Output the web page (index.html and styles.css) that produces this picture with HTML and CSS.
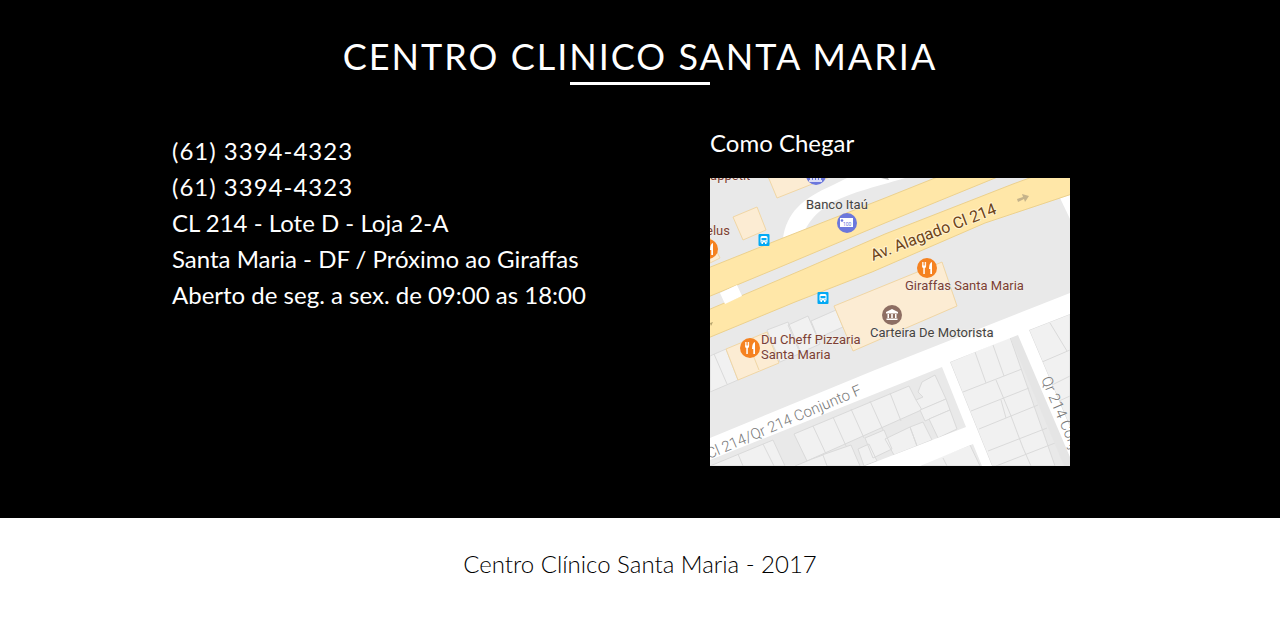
FILE: index.html
```html
<!DOCTYPE html>
<html lang="pt-BR">
<head>
<meta charset="utf-8">
<meta name="viewport" content="width=device-width, initial-scale=1">
<title>Centro Clínico Santa Maria</title>
<link rel="stylesheet" href="styles.css">
</head>
<body>
<section class="contact">
  <h2 class="contact-title">CENTRO CLINICO SANTA MARIA</h2>
  <div class="contact-grid">
    <address class="details">
      <p class="phone">(61) 3394-4323</p>
      <p class="phone">(61) 3394-4323</p>
      <p>CL 214 - Lote D - Loja 2-A</p>
      <p>Santa Maria - DF / Próximo ao Giraffas</p>
      <p>Aberto de seg. a sex. de 09:00 as 18:00</p>
    </address>
    <div class="directions">
      <h3 class="directions-title">Como Chegar</h3>
      <svg class="map" viewBox="0 0 360 288" role="img" aria-label="Mapa: Av. Alagado Cl 214, Santa Maria">
        <defs>
          <g id="food">
            <circle r="10" fill="#f58220"/>
            <path d="M-5-6v4q0 2 1.300 2v6h1.500v-6q1.300 0 1.300-2v-4h-1v3.600h-.8V-6h-.8v3.600h-.7V-6z" fill="#fff"/>
            <path d="M5-6q-3 1-3 7h1.300v5H5z" fill="#fff"/>
          </g>
          <g id="bus">
            <rect x="-5.500" y="-6" width="11" height="12" rx="1" fill="#03a9f4"/>
            <path d="M-3.500-2.500q0-1.500 1.500-1.500h4q1.500 0 1.500 1.500v5h-1v1.500h-1.500v-1.500h-2v1.500h-1.500v-1.500h-1z" fill="#fff"/>
            <path d="M-2.500-2h5v2.300h-5zM-2.500 1.200h1v.8h-1zM1.500 1.200h1v.8h-1z" fill="#03a9f4"/>
          </g>
        </defs>
        <rect width="360" height="288" fill="#e9e9e9"/>

        <g fill="#f1f1f1" stroke="#dadada" stroke-width="1">
          <path d="M0 178 L16 171 L28 202 L0 214z M4 176L17 206"/>
          <path d="M57 152 L78 144 L91 175 L70 184z M78 147 L98 138 L110 166 L90 175z M101 143 L126 132 L133 149 L108 160z"/>
          <path d="M84 256 L199 208 L206 222 L213 219 L208 214 L212 204 L225 197 L236 221 L97 283z"/>
          <path d="M103 248 L116 276 M123 239 L136 268 M141 231 L154 260 M160 223 L173 252 M180 215 L191 243 M206 222 L212 232"/>
          <path d="M210 232 L236 221 L240 232 L215 243z"/>
          <path d="M112 277 L141 267 L150 288 H117z M148 271 L159 266 L167 283 L154 288z M155 260 L174 252 L182 271 L163 280z M175 261 L200 249 L207 268 L184 277z M200 249 L213 244 L222 262 L207 268z M219 241 L240 232 L247 251 L228 260z"/>
          <path d="M0 288 L63 262 L75 288z M28 276 L33 288 M53 266 L64 288 M85 288 L102 281 L113 277 L117 288"/>
          <path d="M240 184 L300 159 L345 288 H282z M265 174 L276 205 M283 167 L294 198 M253 214 L312 191 M286 202 L301 238 L313 270 L321 288 M261 233 L319 210 M269 251 L328 227 M278 273 L337 250 M286 288 L345 265 M291 222 L296 240"/>
          <path d="M319 152 L360 136 V249z M340 145 L357 173 M332 184 L360 172 M342 207 L360 198 M349 223 L360 218"/>
          <path d="M205 288 L260 267 L270 288z M233 280 L237 288"/>
        </g>
        <path d="M300 159 L308 157 L360 279 V288 H354z" fill="#e5e5e5"/>

        <g fill="#fcecd3" stroke="#f0d6a5" stroke-width="1">
          <path d="M23 39 L47 29 L56 52 L33 62z"/>
          <path d="M57 -4 L67 20 L120 -1z"/>
          <path d="M124 128 L232 84 L247 128 L143 173z"/>
          <path d="M16 171 L57 154 L69 185 L28 202z M37 162 L49 192"/>
          <path d="M0 60 L10 80 L0 85z"/>
        </g>

        <g fill="#fff">
          <path d="M0 260 L165 192 L360 115 V136 L319 152 L360 249 V279 L308 157 L240 184 L282 288 H272 L263 266 L210 288 H155 L256 249 L232 189 L0 282z"/>
          <path d="M73 60 C77 35 91 21 123 7 L137 0 H195 C165 9 135 16 118 27 C103 37 99 45 95 52z"/>
          <path d="M350 20 L360 16 V41z"/>
        </g>
        <g fill="#ffe7a8" stroke="#ecd18e" stroke-width="1">
          <path d="M-2 90 L73 60 L175 20 L230 -2 H290 L175 45 L63 92 L-2 119z"/>
          <path d="M-2 132 L92 92 L175 56 L303 6 L325 -2 H362 V16 L275 45 L162 94 L85 124 L-2 160z"/>
        </g>
        <path d="M10 115 L27 107 L32 118 L15 126z" fill="#fff"/>
        <path d="M307 21 L313 19 L312 16 L319 18 L315 24 L314 21 L308 24z" fill="#c5b38a"/>
        <path d="M171 0 L179 2 L178 0z" fill="#bbb"/>
        <path d="M0 145 l3-1-2 4z" fill="#b6a36c"/>

        <g class="map-label map-label-halo">
          <text x="96" y="31">Banco Itaú</text>
          <text x="160" y="159">Carteira De Motorista</text>
        </g>
        <g class="map-label map-label-food map-label-halo">
          <text x="-5" y="2">l'appétit</text>
          <text x="-4" y="57">elus</text>
          <text x="195" y="112">Giraffas Santa Maria</text>
          <text x="51" y="166">Du Cheff Pizzaria</text>
          <text x="51" y="181">Santa Maria</text>
        </g>
        <text class="map-avenue" transform="translate(163 83) rotate(-21)">Av. Alagado Cl 214</text>
        <text class="map-street" transform="translate(-1 281) rotate(-23)">Cl 214/Qr 214 Conjunto F</text>
        <text class="map-street" transform="translate(331 201) rotate(67)">Qr 214 Conjunto</text>

        <use href="#bus" x="54" y="62"/>
        <use href="#bus" x="113" y="120"/>
        <use href="#food" x="217" y="90"/>
        <use href="#food" x="40" y="170"/>
        <use href="#food" x="-2" y="71"/>
        <circle cx="106" cy="-3" r="10" fill="#6b77dc"/>
        <path d="M99 3h13M101-2v4M104-2v4M107-2v4M110-2v4" stroke="#fff" stroke-width="1.500"/>
        <circle cx="137" cy="45" r="10" fill="#6b77dc"/>
        <rect x="130" y="40" width="13" height="9" fill="#fff"/>
        <circle cx="132" cy="42.500" r="1.300" fill="#6b77dc"/>
        <text class="map-note" x="133" y="48">100</text>
        <circle cx="182" cy="137" r="10" fill="#8d6e63"/>
        <path d="M176 135.500V134l6-3 6 3v1.500zM177.500 136h1.500v4h-1.500zM181.200 136h1.600v4h-1.600zM185 136h1.500v4H185zM176.500 140.500h11v1.500h-11z" fill="#fff"/>
      </svg>
    </div>
  </div>
</section>
<footer class="footer">Centro Clínico Santa Maria - 2017</footer>
</body>
</html>
```
FILE: styles.css
```css
* {
  box-sizing: border-box;
}

body {
  margin: 0;
  background: #fff;
  color: #000;
  font-family: Lato, "Liberation Sans", sans-serif;
  font-size: 24px;
  line-height: 36px;
}

h2,
h3,
p {
  margin: 0;
  font-weight: 400;
}

.contact {
  padding: 35px 16px 52px;
  background: #000;
  color: #fff;
}

.contact-title {
  font-size: 36px;
  line-height: 42px;
  letter-spacing: 2px;
  text-align: center;
}

.contact-title::after {
  content: "";
  display: block;
  width: 140px;
  height: 3px;
  margin: 5px auto 0;
  background: #fff;
}

.contact-grid {
  display: grid;
  grid-template-columns: 1fr 1fr;
  max-width: 1140px;
  margin: 40px auto 0;
}

.details {
  padding: 8px 0 0 102px;
  font-style: normal;
}

.phone {
  letter-spacing: 1px;
}

.directions {
  padding-left: 70px;
}

.directions-title {
  font-size: 24px;
}

.map {
  display: block;
  width: 100%;
  max-width: 360px;
  margin-top: 17px;
}

.map-label {
  font-family: Roboto, sans-serif;
  font-size: 13px;
  fill: #444;
}

.map-label-food {
  fill: #7b3f35;
}

.map-label-halo {
  paint-order: stroke;
  stroke: #f4f0ea;
  stroke-width: 1px;
}

.map-avenue {
  font-family: Roboto, sans-serif;
  font-size: 16px;
  fill: #6d4318;
  paint-order: stroke;
  stroke: #fff3d0;
  stroke-width: 2px;
}

.map-street {
  font-family: Roboto, sans-serif;
  font-size: 15px;
  font-weight: 300;
  fill: #777;
}

.map-note {
  font-family: Roboto, sans-serif;
  font-size: 5px;
  fill: #6b77dc;
}

.footer {
  padding: 28px 16px 36px;
  font-weight: 300;
  text-align: center;
}

@media (max-width: 900px) {
  .contact-grid {
    grid-template-columns: 1fr;
    gap: 32px;
  }

  .details,
  .directions {
    padding-left: 16px;
  }
}
```
